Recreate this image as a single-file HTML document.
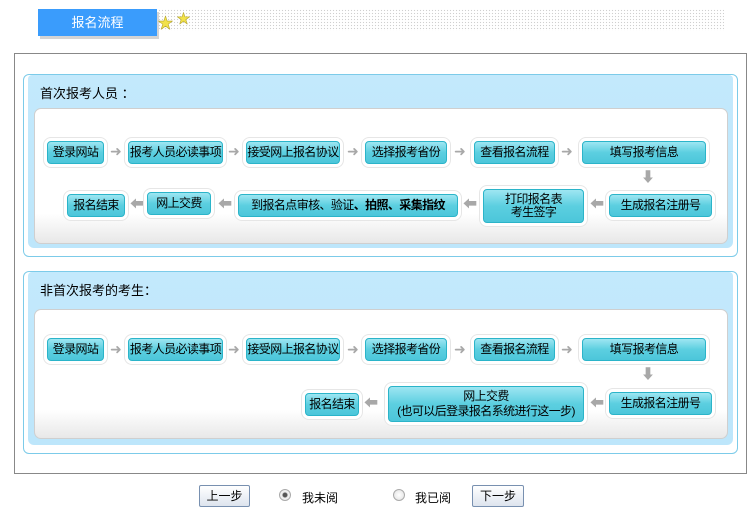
<!DOCTYPE html>
<html><head><meta charset="utf-8"><style>
*{margin:0;padding:0;box-sizing:border-box}
body{width:756px;height:514px;background:#fff;position:relative;overflow:hidden;font-family:"Liberation Sans","Noto Sans CJK SC",sans-serif;font-size:12px;color:#000}
.a{position:absolute}
.tab{left:38px;top:9px;width:119px;height:27px;background:#3a9cfc;color:#fff;font-size:13px;text-align:center;line-height:27px;box-shadow:2px 3px 0 #d4d4d4}
.dots{left:158px;top:9px;width:566px;height:22px;background-image:radial-gradient(#cfcfcf 0.7px,transparent 0.8px);background-size:3px 3px}
.outer{left:14px;top:53px;width:733px;height:421px;border:1px solid #888}
.panel{left:23px;width:715px;border:1px solid #7ccbe9;border-radius:6px;background:#fff}
.fill{position:absolute;left:4px;right:4px;top:0;bottom:8px;background:linear-gradient(#c3e9fc,#bde6fb);border-radius:4px 4px 6px 6px}
.panel .t{position:absolute;left:16px;font-size:13px}
.wb{left:10px;width:694px;border:1px solid #cfcfcf;border-radius:7px;background:linear-gradient(#fff 0,#fff 78%,#e8e8e8 100%)}
.b{position:absolute;height:23px;border:1px solid #2bb4c9;border-radius:4px;background:linear-gradient(#9ee6f2,#5ccfe0 50%,#4cc6da);box-shadow:0 0 0 3px #fff,0 0 0 4px #e6e6e6;text-align:center;line-height:21px;font-size:12px;white-space:nowrap;letter-spacing:-0.6px}
.ar{position:absolute;color:#a8a8a8;font-size:14px;line-height:14px}
.btn{position:absolute;top:485px;height:22px;width:51px;border:1px solid #7890b0;border-radius:2px;background:linear-gradient(#fff,#dde4ee);text-align:center;line-height:20px;font-size:12px}
.rad{position:absolute;top:489px;width:12px;height:12px;border-radius:50%;border:1px solid #aaa;background:radial-gradient(#fff,#e0e0e0)}
</style></head><body>
<div class="a tab">报名流程</div>
<div class="a dots"></div>
<div class="a" style="left:158px;top:12px;color:#f2e24a;font-size:15px;-webkit-text-stroke:0.6px #b8a830">★</div>
<div class="a" style="left:177px;top:8px;color:#f2e24a;font-size:13px;-webkit-text-stroke:0.6px #b8a830">★</div>
<div class="a outer"></div>

<div class="a panel" style="top:74px;height:183px">
 <div class="fill"></div>
 <div class="t" style="top:8px">首次报考人员 ：</div>
 <div class="a wb" style="top:33px;height:136px"></div>
</div>
<div class="a panel" style="top:271px;height:183px">
 <div class="fill"></div>
 <div class="t" style="top:8px">非首次报考的考生：</div>
 <div class="a wb" style="top:37px;height:130px"></div>
</div>

<!-- row 1 -->
<div class="b" style="left:47px;top:141px;width:57px">登录网站</div>
<div class="ar" style="left:110px;top:144px">➜</div>
<div class="b" style="left:128px;top:141px;width:95px">报考人员必读事项</div>
<div class="ar" style="left:228px;top:144px">➜</div>
<div class="b" style="left:246px;top:141px;width:94px">接受网上报名协议</div>
<div class="ar" style="left:347px;top:144px">➜</div>
<div class="b" style="left:365px;top:141px;width:82px">选择报考省份</div>
<div class="ar" style="left:454px;top:144px">➜</div>
<div class="b" style="left:474px;top:141px;width:81px">查看报名流程</div>
<div class="ar" style="left:561px;top:144px">➜</div>
<div class="b" style="left:582px;top:141px;width:124px">填写报考信息</div>
<div class="ar" style="left:641px;top:170px">⬇</div>
<div class="b" style="left:67px;top:194px;width:58px">报名结束</div>
<div class="ar" style="left:130px;top:197px">⬅</div>
<div class="b" style="left:147px;top:192px;width:64px">网上交费</div>
<div class="ar" style="left:218px;top:197px">⬅</div>
<div class="b" style="left:238px;top:194px;width:220px">到报名点审核、验证<b>、拍照、采集指纹</b></div>
<div class="ar" style="left:463px;top:197px">⬅</div>
<div class="b" style="left:483px;top:189px;width:101px;height:34px;line-height:13px;padding-top:3px">打印报名表<br>考生签字</div>
<div class="ar" style="left:590px;top:197px">⬅</div>
<div class="b" style="left:609px;top:194px;width:103px">生成报名注册号</div>

<!-- row 2 -->
<div class="b" style="left:47px;top:338px;width:57px">登录网站</div>
<div class="ar" style="left:110px;top:342px">➜</div>
<div class="b" style="left:128px;top:338px;width:95px">报考人员必读事项</div>
<div class="ar" style="left:228px;top:342px">➜</div>
<div class="b" style="left:246px;top:338px;width:94px">接受网上报名协议</div>
<div class="ar" style="left:347px;top:342px">➜</div>
<div class="b" style="left:365px;top:338px;width:82px">选择报考省份</div>
<div class="ar" style="left:454px;top:342px">➜</div>
<div class="b" style="left:474px;top:338px;width:81px">查看报名流程</div>
<div class="ar" style="left:561px;top:342px">➜</div>
<div class="b" style="left:582px;top:338px;width:124px">填写报考信息</div>
<div class="ar" style="left:641px;top:367px">⬇</div>
<div class="b" style="left:305px;top:393px;width:54px">报名结束</div>
<div class="ar" style="left:364px;top:396px">⬅</div>
<div class="b" style="left:388px;top:386px;width:196px;height:36px;line-height:15px;padding-top:2px">网上交费<br>(也可以后登录报名系统进行这一步)</div>
<div class="ar" style="left:590px;top:396px">⬅</div>
<div class="b" style="left:609px;top:392px;width:103px">生成报名注册号</div>

<div class="btn" style="left:199px">上一步</div>
<div class="rad" style="left:279px;background:radial-gradient(#555 0,#555 2px,#eee 3px)"></div>
<div class="a" style="left:302px;top:489px">我未阅</div>
<div class="rad" style="left:393px"></div>
<div class="a" style="left:415px;top:489px">我已阅</div>
<div class="btn" style="left:472px;width:52px">下一步</div>
</body></html>
